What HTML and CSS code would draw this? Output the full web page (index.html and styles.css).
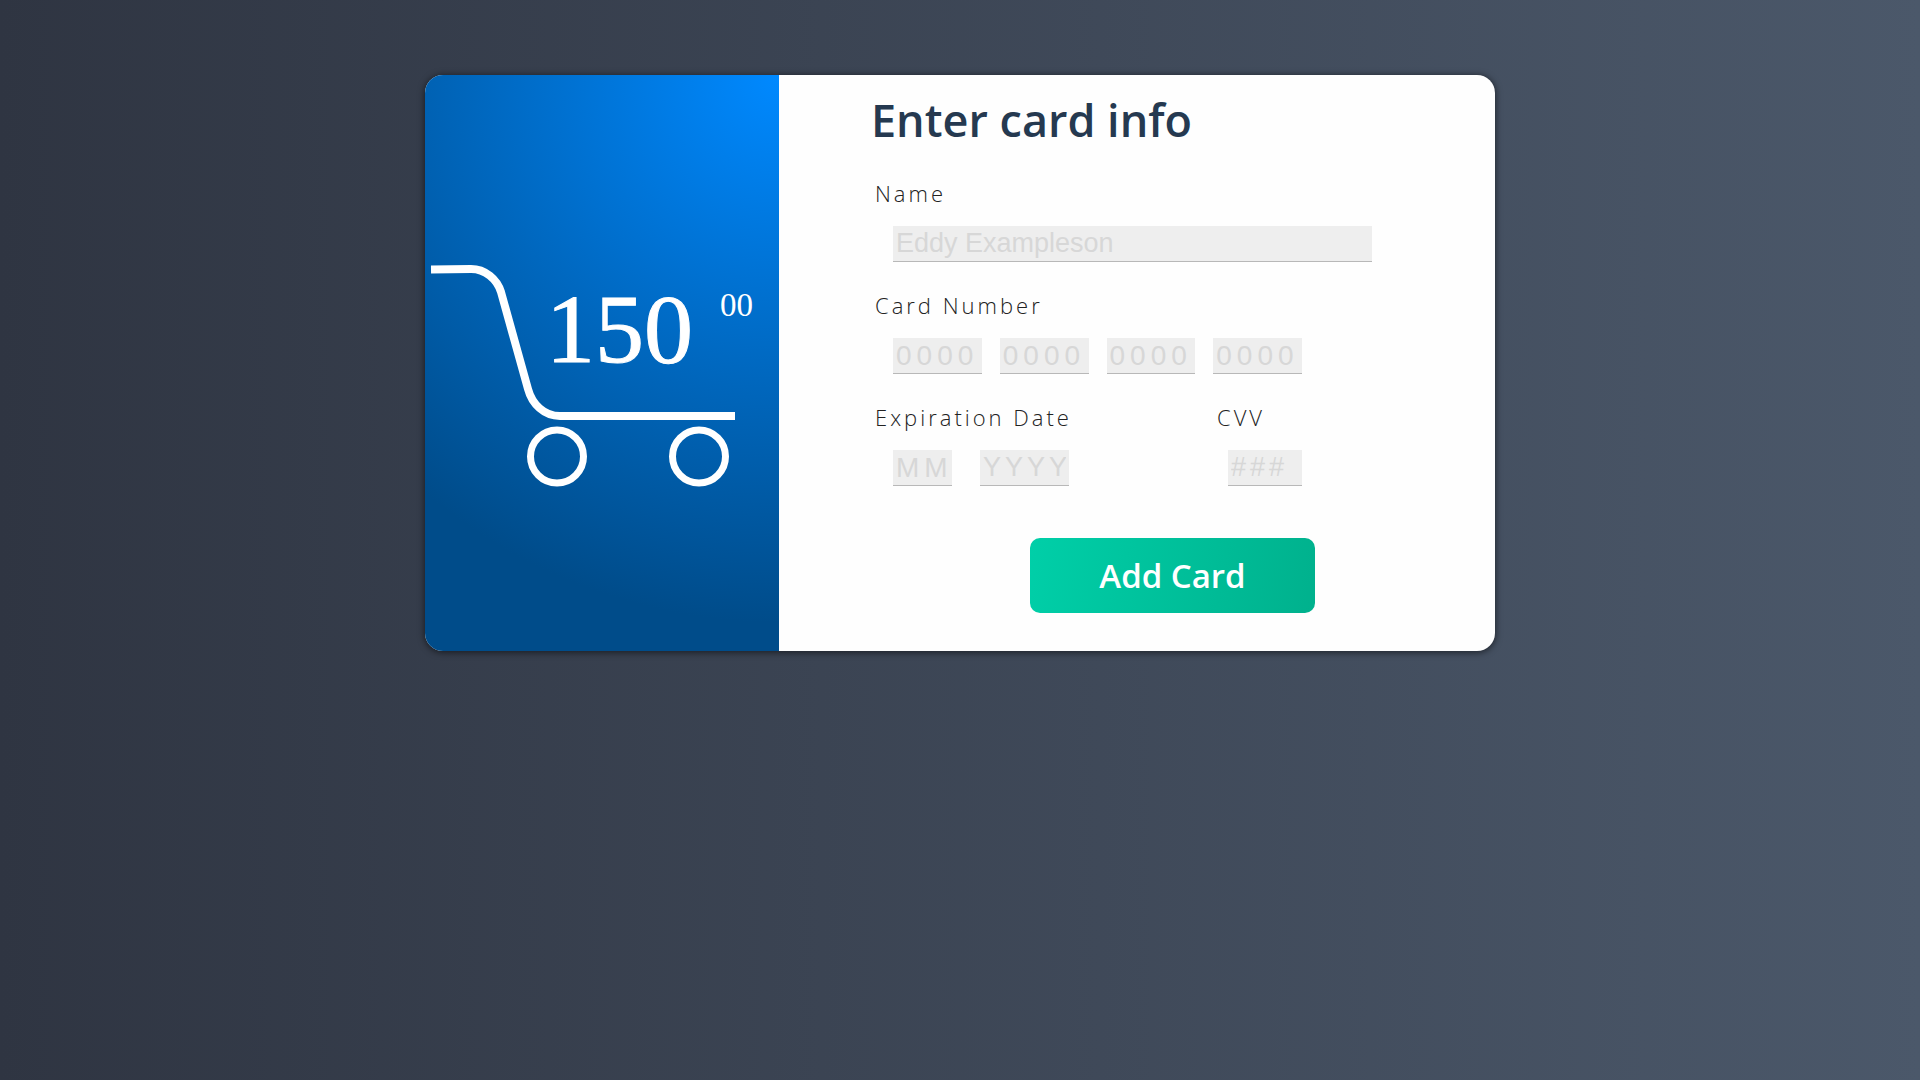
FILE: index.html
```html
<!DOCTYPE html>
<html lang="en">
<head>
<meta charset="utf-8">
<meta name="viewport" content="width=device-width, initial-scale=1">
<title>Enter card info</title>
<link rel="stylesheet" href="styles.css">
</head>
<body>
<main class="card">
  <section class="summary">
    <svg class="cart" viewBox="0 0 346 240" role="img" aria-label="Cart total 150.00">
      <path class="cart-frame" d="M2 17.500L42 17C56 17 68 27 72 40L99 137C103 152 115 164 131 164H306"/>
      <circle class="cart-wheel" cx="128" cy="204.500" r="26.500"/>
      <circle class="cart-wheel" cx="270" cy="204.500" r="26.500"/>
      <text class="price" x="117" y="110">150</text>
      <text class="cents" x="291" y="64">00</text>
    </svg>
  </section>
  <form class="form">
    <h1 class="title">Enter card info</h1>
    <div class="field">
      <label class="label" for="name">Name</label>
      <div class="inputs"><input class="input input-name" id="name" type="text" placeholder="Eddy Exampleson"></div>
    </div>
    <div class="field">
      <label class="label" for="number-1">Card Number</label>
      <div class="inputs inputs-number">
        <input class="input" id="number-1" type="text" placeholder="0000" maxlength="4">
        <input class="input" aria-label="Card number, second group" type="text" placeholder="0000" maxlength="4">
        <input class="input" aria-label="Card number, third group" type="text" placeholder="0000" maxlength="4">
        <input class="input" aria-label="Card number, fourth group" type="text" placeholder="0000" maxlength="4">
      </div>
    </div>
    <div class="row">
      <div class="field">
        <label class="label" for="month">Expiration Date</label>
        <div class="inputs inputs-date">
          <input class="input input-month" id="month" type="text" placeholder="MM" maxlength="2">
          <input class="input input-year" aria-label="Expiration year" type="text" placeholder="YYYY" maxlength="4">
        </div>
      </div>
      <div class="field">
        <label class="label" for="cvv">CVV</label>
        <input class="input input-cvv" id="cvv" type="text" placeholder="###" maxlength="3">
      </div>
    </div>
    <button class="submit" type="submit">Add Card</button>
  </form>
</main>
</body>
</html>
```
FILE: styles.css
```css
* {
  box-sizing: border-box;
}

body {
  margin: 0;
  min-height: 100vh;
  padding: 75px 16px;
  background: linear-gradient(to right, #2f3542, #4b586a);
  font-family: "Open Sans", sans-serif;
}

.card {
  display: grid;
  grid-template-columns: 354px 1fr;
  max-width: 1070px;
  margin: 0 auto;
  overflow: hidden;
  border-radius: 18px;
  background: #fefefe;
  box-shadow: 0 1px 6px 1px rgba(0, 0, 0, 0.5);
}

.summary {
  display: flex;
  align-items: center;
  padding: 18px 4px 0;
  background: radial-gradient(circle at top right, #0089ff, #004c8a 81%);
}

.cart {
  display: block;
  width: 100%;
}

.cart-frame,
.cart-wheel {
  fill: none;
  stroke: #fff;
  stroke-width: 8px;
}

.cart-wheel {
  stroke-width: 7px;
}

.price,
.cents {
  fill: #fff;
  stroke: #fff;
  stroke-width: 1px;
  font-family: "Liberation Serif", serif;
  font-size: 98px;
}

.cents {
  stroke: none;
  font-size: 33px;
}

.form {
  display: flex;
  flex-direction: column;
  padding: 15px 91px 38px 92px;
}

.title {
  margin: 0 0 28px;
  color: #253950;
  font-size: 45px;
  font-weight: 600;
  line-height: 60px;
}

.field {
  display: flex;
  flex-direction: column;
  gap: 18px;
  margin-bottom: 28px;
  padding-left: 4px;
}

.label {
  color: #222;
  font-size: 22px;
  font-weight: 300;
  line-height: 30px;
  letter-spacing: 3px;
}

.inputs {
  display: flex;
  gap: 18px;
  padding-left: 18px;
}

.inputs-number {
  max-width: 427px;
}

.inputs-date {
  gap: 28px;
}

.input {
  min-width: 0;
  height: 36px;
  padding: 0 3px;
  border: 0;
  border-bottom: 1px solid #b8b8b8;
  border-radius: 0;
  background: #eee;
  color: #333;
  font-family: "Liberation Sans", sans-serif;
  font-size: 27px;
}

.input::placeholder {
  color: #d7d7d7;
}

.input-name {
  width: 100%;
  max-width: 479px;
}

.inputs-number .input,
.input-month {
  font-size: 28px;
  letter-spacing: 5px;
}

.inputs-number .input {
  flex: 1;
}

.input-month {
  width: 59px;
}

.input-year {
  width: 89px;
  letter-spacing: 4px;
}

.row {
  display: flex;
  justify-content: space-between;
  max-width: 431px;
}

.input-cvv {
  width: 74px;
  margin-left: 11px;
  letter-spacing: 4px;
}

.submit {
  width: 285px;
  height: 75px;
  margin: 24px 89px 0 0;
  align-self: flex-end;
  border: 0;
  border-radius: 10px;
  background: linear-gradient(100deg, #00cfa8, #00b18d);
  color: #fff;
  font-family: inherit;
  font-size: 33px;
  font-weight: 600;
  cursor: pointer;
}

@media (max-width: 900px) {
  .card {
    grid-template-columns: 1fr;
  }

  .form {
    padding: 16px 24px 38px;
  }

  .submit {
    max-width: 100%;
    margin-right: 0;
  }
}
```
